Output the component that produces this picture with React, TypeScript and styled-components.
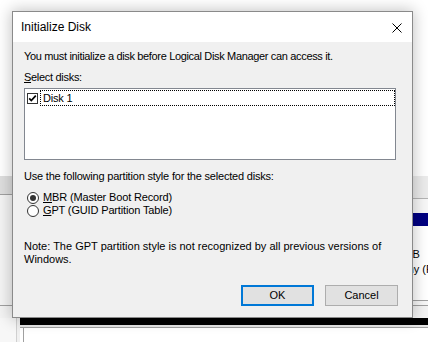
import React from 'react';
import styled, { createGlobalStyle } from 'styled-components';

const Global = createGlobalStyle`
  html, body { margin: 0; padding: 0; background: #ffffff; }
  body {
    width: 428px; height: 342px; overflow: hidden;
    font-family: "Liberation Sans", Arial, sans-serif;
  }
`;

const Stage = styled.div`
  position: relative;
  width: 428px;
  height: 342px;
  overflow: hidden;
  background: #ffffff;
`;

/* ---------- background Disk Management window (behind the dialog) ---------- */
const BackWindow = styled.div`
  position: absolute;
  left: 0;
  top: 176px;
  width: 428px;
  height: 166px;
  display: flex;
  flex-direction: column;
  font-size: 11px;
  color: #000;
`;

const DiskRow = styled.div`
  display: flex;
  height: 130px;
  border-bottom: 1px solid #a0a0a0;
  box-sizing: border-box;
`;

const DiskLabel = styled.div`
  width: 120px;
  flex-shrink: 0;
  display: flex;
  flex-direction: column;
  background: #f4f4f4;
`;

const DiskLabelHead = styled.div`
  height: 18px;
  background: #dedede;
  border-bottom: 1px solid #a0a0a0;
`;

const Partition = styled.div`
  flex: 1;
  min-width: 0;
  display: flex;
  flex-direction: column;
  background: #f7f7f7;
`;

const PartTop = styled.div`
  height: 22px;
  background: #ebebeb;
  border-bottom: 1px solid #b4b4b4;
`;

const PartGap = styled.div`
  height: 14px;
`;

const NavyBar = styled.div`
  height: 13px;
  background: #000080;
  margin-left: 262px;
`;

const PartBody = styled.div`
  flex: 1;
  min-width: 0;
  background: #ffffff;
  margin-left: 262px;
  margin-bottom: 4px;
  border-bottom: 1px solid #a0a0a0;
  padding: 21px 0 0 0;
  display: flex;
  flex-direction: column;
  line-height: 15px;
  white-space: nowrap;
  overflow: hidden;
`;

const GapBand = styled.div`
  height: 12px;
  background: #f3f3f3;
`;

const BottomArea = styled.div`
  flex: 1;
  display: flex;
`;

const LeftEdge = styled.div`
  width: 20px;
  flex-shrink: 0;
  background: #f0f0f0;
  border-left: 16px solid #f7f7f7;
  box-sizing: border-box;
  box-shadow: inset 1px 0 0 #d0d0d0;
`;

const BottomMain = styled.div`
  flex: 1;
  display: flex;
  flex-direction: column;
`;

const BlackBar = styled.div`
  height: 7px;
  background: #000;
`;

const PanelGap = styled.div`
  height: 2px;
  background: #e6e6e6;
  border-bottom: 1px solid #a0a0a0;
`;

const WhitePanel = styled.div`
  flex: 1;
  background: #fff;
  margin-left: 3px;
  border-left: 1px solid #a0a0a0;
`;

/* ---------- dialog ---------- */
const Dialog = styled.div`
  position: absolute;
  left: 12px;
  top: 11px;
  width: 401px;
  height: 307px;
  box-sizing: border-box;
  border: 1px solid #8a8a8a;
  background: #f0f0f0;
  box-shadow: 0 0 14px 1px rgba(0, 0, 0, 0.24);
  display: flex;
  flex-direction: column;
  font-family: "Liberation Sans", Arial, sans-serif;
  font-size: 11px;
  line-height: 13px;
  color: #000;
`;

const TitleBar = styled.div`
  height: 30px;
  background: #ffffff;
  display: flex;
  align-items: center;
  justify-content: space-between;
  padding: 0 10px 0 8px;
`;

const Title = styled.span`
  font-size: 12px;
  color: #000;
  padding-top: 1px;
`;

const CloseIcon = styled.svg`
  width: 10px;
  height: 10px;
  display: block;
  margin-top: 2px;
`;

const Body = styled.div`
  flex: 1;
  display: flex;
  flex-direction: column;
  padding: 8px 16px 0 11px;
`;

const Text = styled.div<{ $mt?: number; $ls?: number }>`
  margin-top: ${(p) => p.$mt ?? 0}px;
  letter-spacing: ${(p) => p.$ls ?? 0}px;
  white-space: nowrap;
`;

const ListBox = styled.div`
  margin-top: 4px;
  height: 72px;
  box-sizing: border-box;
  border: 1px solid #828790;
  background: #ffffff;
  padding: 1px 0 0 0;
`;

const ItemRow = styled.div`
  display: flex;
  align-items: center;
  height: 16px;
`;

const CheckBox = styled.svg`
  width: 11px;
  height: 11px;
  display: block;
  margin-left: 2px;
`;

const FocusLabel = styled.div`
  flex: 1;
  height: 16px;
  box-sizing: border-box;
  margin-left: 2px;
  border: 1px dotted #000;
  padding-left: 2px;
  display: flex;
  align-items: center;
  letter-spacing: -0.2px;
`;

const RadioGroup = styled.div`
  margin-top: 8px;
  display: flex;
  flex-direction: column;
`;

const RadioRow = styled.div`
  display: flex;
  align-items: center;
  height: 13px;
  letter-spacing: -0.15px;
`;

const RadioIcon = styled.svg`
  width: 12px;
  height: 12px;
  display: block;
  margin-left: 3px;
  margin-right: 4px;
`;

const ButtonRow = styled.div`
  margin-top: 19px;
  margin-right: -2px;
  display: flex;
  justify-content: flex-end;
  gap: 11px;
`;

const Button = styled.div<{ $default?: boolean }>`
  width: 73px;
  height: 21px;
  box-sizing: border-box;
  background: #e1e1e1;
  border: ${(p) => (p.$default ? '2px solid #0078d7' : '1px solid #adadad')};
  display: flex;
  align-items: center;
  justify-content: center;
  font-size: 11px;
`;

const Radio = ({ checked }: { checked?: boolean }) => (
  <RadioIcon viewBox="0 0 12 12">
    <circle cx="6" cy="6" r="5.5" fill="#fff" stroke="#333" strokeWidth="1" />
    {checked && <circle cx="6" cy="6" r="3" fill="#333" />}
  </RadioIcon>
);

export default function App() {
  return (
    <Stage>
      <Global />
      <BackWindow>
        <DiskRow>
          <DiskLabel>
            <DiskLabelHead />
          </DiskLabel>
          <Partition>
            <PartTop />
            <PartGap />
            <NavyBar />
            <PartBody>
              <span>499 MB</span>
              <span>Healthy (Recovery Partition)</span>
            </PartBody>
          </Partition>
        </DiskRow>
        <GapBand />
        <BottomArea>
          <LeftEdge />
          <BottomMain>
            <BlackBar />
            <PanelGap />
            <WhitePanel />
          </BottomMain>
        </BottomArea>
      </BackWindow>

      <Dialog>
        <TitleBar>
          <Title>Initialize Disk</Title>
          <CloseIcon viewBox="0 0 10 10">
            <path d="M0.5 0.5 L9.5 9.5 M9.5 0.5 L0.5 9.5" stroke="#000" strokeWidth="1" fill="none" />
          </CloseIcon>
        </TitleBar>
        <Body>
          <Text $ls={-0.34}>You must initialize a disk before Logical Disk Manager can access it.</Text>
          <Text $mt={8} $ls={-0.3}>
            <u>S</u>elect disks:
          </Text>
          <ListBox>
            <ItemRow>
              <CheckBox viewBox="0 0 11 11">
                <rect x="0.5" y="0.5" width="10" height="10" fill="#fff" stroke="#333" />
                <path d="M2.2 5.4 L4.3 7.6 L8.8 2.6" stroke="#000" strokeWidth="1.7" fill="none" />
              </CheckBox>
              <FocusLabel>Disk 1</FocusLabel>
            </ItemRow>
          </ListBox>
          <Text $mt={10} $ls={-0.2}>
            Use the following partition style for the selected disks:
          </Text>
          <RadioGroup>
            <RadioRow>
              <Radio checked />
              <span>
                <u>M</u>BR (Master Boot Record)
              </span>
            </RadioRow>
            <RadioRow>
              <Radio />
              <span>
                <u>G</u>PT (GUID Partition Table)
              </span>
            </RadioRow>
          </RadioGroup>
          <Text $mt={23}>
            Note: The GPT partition style is not recognized by all previous versions of
            <br />
            Windows.
          </Text>
          <ButtonRow>
            <Button $default>OK</Button>
            <Button>Cancel</Button>
          </ButtonRow>
        </Body>
      </Dialog>
    </Stage>
  );
}
